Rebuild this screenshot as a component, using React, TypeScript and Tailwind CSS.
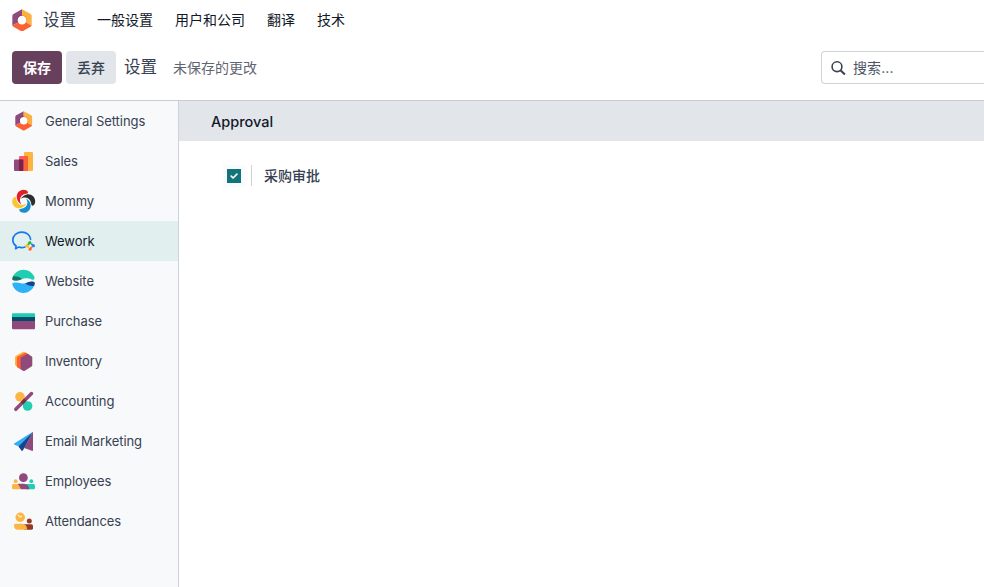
import type { ReactNode } from "react";

function Hex({ className }: { className: string }) {
  return (
    <svg className={className} viewBox="3 2.4 17.4 19.8" fill="none">
      <path d="M11.7 2.6 L4.2 6.8 Q3.2 7.4 3.2 8.4 V17 L11.7 12.3Z" fill="#8F4A7B" />
      <path d="M11.7 2.6 L19.2 6.8 Q20.2 7.4 20.2 8.4 V17 L11.7 12.3Z" fill="#FBB03F" />
      <path d="M11.7 12.3 L20.2 17 Q20 17.7 19.2 18.1 L12.6 21.8 Q11.7 22.2 10.8 21.8 L4.2 18.1 Q3.4 17.7 3.2 17Z" fill="#FC6133" />
      <path d="M11.7 7.4 L8.9 8.5 L7.6 11 V14.2 L11.7 12.3Z" fill="#6B3162" />
      <path d="M11.7 7.4 L14.6 8.6 L15.9 11 V14.5 L11.7 12.3Z" fill="#F78A2E" />
      <circle cx="11.7" cy="12.2" r="3.8" fill="white" />
    </svg>
  );
}

function Icon({ children }: { children: ReactNode }) {
  return (
    <svg className="h-6 w-6 shrink-0" viewBox="0 0 24 24" fill="none">
      {children}
    </svg>
  );
}

const blade = "M4.9 9.4 C3.9 4.8 7.2 .8 11.6 .8 C13.5 .8 15.3 1.6 16 3 C16.6 4.2 15.6 4.6 14 4.8 C10.3 5.3 8.2 7.8 8 10.6 C7.9 12.3 8.4 13.9 9.4 15.2 C7.2 14.1 5.5 12.2 4.9 9.4Z";

const apps = [
  { name: "General Settings", icon: <span className="flex h-6 w-6 items-center justify-center"><Hex className="h-[19.6px] w-[17.4px]" /></span> },
  {
    name: "Sales",
    icon: (
      <Icon>
        <rect x="12" y="3" width="9" height="19" rx="1" fill="#FBB540" />
        <rect x="7" y="7" width="9" height="15" rx="1" fill="#FF5A65" />
        <path d="M12 7h3a1 1 0 0 1 1 1v13a1 1 0 0 1-1 1h-3z" fill="#FC6232" />
        <rect x="2" y="10.4" width="9.3" height="11.6" rx="1" fill="#8F4A7B" />
        <path d="M7 10.4h3.3a1 1 0 0 1 1 1V21a1 1 0 0 1-1 1H7z" fill="#7A2249" />
      </Icon>
    ),
  },
  {
    name: "Mommy",
    icon: (
      <Icon>
        <path d={blade} fill="#E0212B" />
        <path d={blade} fill="#2D2D2E" transform="rotate(90 11.7 12.3)" />
        <path d={blade} fill="#178FD0" transform="rotate(180 11.7 12.3)" />
        <path d={blade} fill="#F9C633" transform="rotate(270 11.7 12.3)" />
      </Icon>
    ),
  },
  {
    name: "Wework",
    icon: (
      <Icon>
        <path d="M18.6 10.4 C18.2 6.1 14.5 3.1 9.9 3.1 C4.8 3.1 .8 6.5 .8 10.9 C.8 13.4 2.1 15.6 4.1 17 L3.6 19.7 L6.5 18.1 C8.5 18.7 11 18.8 13 18" stroke="#1677F2" strokeWidth="1.6" strokeLinecap="round" strokeLinejoin="round" />
        <path d="M16.3 15.4 L17.8 13.9" stroke="#27B928" strokeWidth="2" strokeLinecap="round" />
        <path d="M19.7 15.2 L21.2 16.7" stroke="#247CF0" strokeWidth="1.8" strokeLinecap="round" />
        <path d="M19.6 18.4 L18.1 19.9" stroke="#FB682F" strokeWidth="2" strokeLinecap="round" />
        <path d="M16.3 18.1 L14.9 16.7" stroke="#FBC01D" strokeWidth="2" strokeLinecap="round" />
        <circle cx="17.8" cy="13.4" r="1.5" fill="#27B928" />
        <circle cx="21.5" cy="16.8" r="1.5" fill="#247CF0" />
        <circle cx="18" cy="20.3" r="1.5" fill="#FB682F" />
        <circle cx="14.6" cy="16.8" r="1.5" fill="#FBC01D" />
      </Icon>
    ),
  },
  {
    name: "Website",
    icon: (
      <Icon>
        <path d="M.6 8.2 C2.5 3.8 6.5 .8 11.5 .8 S20.7 3.8 22.5 8.2 C22.7 10.6 21.8 11 19.6 10.4 C14.5 8.4 11 9.7 8.4 10.7 C5 12 1.2 12 .3 10.5Z" fill="#22CDB2" />
        <path d="M1 7.5 C3 7 7.3 7.5 9.9 10 C6 12 1.5 12 .3 10.6 Q.4 8.4 1 7.5Z" fill="#1B6E64" />
        <path d="M.2 14.5 C2.6 12.7 6 13.4 8.9 14.3 C13 15.6 17.3 12.5 20.5 12.6 Q22.7 12.8 22.9 14 C21.9 19.8 17.4 23.9 11.5 23.9 S1.2 19.8 .2 14.5Z" fill="#2DB2F7" />
        <path d="M13.2 14.5 C16.4 12.7 20.3 11.9 22.4 13.2 Q23 14.1 22.2 16.7 C19.2 17.5 15.8 16.5 13.2 14.5Z" fill="#19418E" />
      </Icon>
    ),
  },
  {
    name: "Purchase",
    icon: (
      <Icon>
        <path d="M1 4.3h21a1 1 0 0 1 1 1V9H0V5.3a1 1 0 0 1 1-1z" fill="#1DCCB2" />
        <path d="M0 8h23v5H0z" fill="#06496A" />
        <path d="M0 12h23v7.3a1 1 0 0 1-1 1H1a1 1 0 0 1-1-1z" fill="#8F4A7B" />
      </Icon>
    ),
  },
  {
    name: "Inventory",
    icon: (
      <Icon>
        <path d="M10.7 2.9 Q11.7 2.4 12.6 2.9 L16 4.8 L7 18.5 L4 17 Q3 16.4 3 15.3 V8.4 Q3 7.3 4 6.7Z" fill="#FBB540" />
        <path d="M5.4 7.8 L12.5 3.9 Q13.3 3.5 14.2 4 L17.5 5.8 L9 20.4 L5.4 18.4 Q4.8 18 4.8 17V8.8Q4.8 8.2 5.4 7.8Z" fill="#FC6132" />
        <path d="M9.4 8.2 L14.6 5.2 Q15.4 4.7 16.2 5.2 L19.5 7.2 Q20.3 7.6 20.3 8.6 V16 Q20.3 17 19.5 17.5 L12.8 21.7 Q11.9 22.2 11 21.7 L8.6 20.2 V9.6 Q8.6 8.7 9.4 8.2Z" fill="#8F4A7B" />
      </Icon>
    ),
  },
  {
    name: "Accounting",
    icon: (
      <Icon>
        <circle cx="8" cy="7.8" r="4.8" fill="#FBB540" />
        <circle cx="15.6" cy="17" r="4.8" fill="#22CDB2" />
        <path d="M3.8 20.3 L19.5 4.6" stroke="#8F4A7B" strokeWidth="3.5" strokeLinecap="round" />
        <path d="M9.8 14.3 L13.4 10.7" stroke="#72304A" strokeWidth="3.3" />
      </Icon>
    ),
  },
  {
    name: "Email Marketing",
    icon: (
      <Icon>
        <path d="M21 2.7 V21 Q21 22.2 19.8 21.8 L12.2 19.1Z" fill="#8F4A7B" />
        <path d="M21 2.7 L2.2 14.4 Q1.3 15.3 2.6 15.8 L7.2 17.5Z" fill="#2DAEF7" />
        <path d="M21 2.7 L6.5 17.4 L9.6 21.7 Q10.4 22.3 10.9 21.3 L12.3 19Z" fill="#144591" />
      </Icon>
    ),
  },
  {
    name: "Employees",
    icon: (
      <Icon>
        <circle cx="11.4" cy="8.7" r="4.4" fill="#8F4A7B" />
        <circle cx="3.7" cy="12.2" r="1.9" fill="#FBB540" />
        <circle cx="19.3" cy="12.2" r="1.9" fill="#22CDB2" />
        <path d="M1.5 14.9H9v5.4H1.2Q0 20.3 0 19.1V16.7Q0 14.9 1.5 14.9Z" fill="#FBB540" />
        <path d="M13 14.9h8.5Q23 14.9 23 16.7v2.4Q23 20.3 21.8 20.3H14Z" fill="#22CDB2" />
        <path d="M5.7 14.8 H12 Q15 14.8 16.4 17.3 Q17.2 18.8 17.2 20.3 H9 Q8 17.5 5.7 14.8Z" fill="#8F4A7B" />
      </Icon>
    ),
  },
  {
    name: "Attendances",
    icon: (
      <Icon>
        <circle cx="8.2" cy="8.2" r="4.7" fill="#FBB540" />
        <path d="M5.9 5.9 L8.2 8.2 L9.6 7" stroke="#FFF0D4" strokeWidth="1.1" strokeLinecap="round" strokeLinejoin="round" />
        <circle cx="17.3" cy="12" r="2.5" fill="#953B24" />
        <path d="M11 15.2h8.4Q21 15.2 21 17v2.3Q21 20.7 19.7 20.7H12Z" fill="#953B24" />
        <path d="M3.5 14.8H10Q14.9 15 15.2 20.7H6Q2 20.7 2 16.5Q2 14.8 3.5 14.8Z" fill="#FBB540" />
      </Icon>
    ),
  },
];

export default function App() {
  return (
    <div className="flex h-[587px] w-[984px] flex-col overflow-hidden bg-white font-['Inter','Noto_Sans_CJK_SC',sans-serif] text-sm text-[#111827]">
      <header className="flex h-10 shrink-0 items-center whitespace-nowrap pl-3">
        <Hex className="h-[22.5px] w-5" />
        <span className="ml-[11px] w-[54px] pt-0.5 text-[16.5px] text-[#374151]">设置</span>
        <nav className="flex gap-[22px]">
          <span className="w-[56px]">一般设置</span>
          <span>用户和公司</span>
          <span>翻译</span>
          <span>技术</span>
        </nav>
      </header>
      <div className="flex h-[61px] shrink-0 items-start justify-between border-b border-[#c9ccd2] pt-[11px]">
        <div className="flex h-[33px] items-center pl-3">
          <button className="h-[33px] w-[50px] rounded-[4px] bg-[#66405c] font-bold text-white">保存</button>
          <button className="ml-1 h-[33px] w-[50px] rounded-[4px] bg-[#e2e5ea] font-medium text-[#374151]">丢弃</button>
          <span className="ml-2 text-[16.5px] text-[#374151]">设置</span>
          <span className="ml-4 text-[#5f6673]">未保存的更改</span>
        </div>
        <div className="flex h-[33px] w-[163px] items-center rounded-l-[4px] border border-r-0 border-[#cfd2d6] pl-2 text-[#4b5563]">
          <svg className="h-4 w-4" viewBox="0 0 16 16" fill="none" stroke="#374151" strokeWidth="1.6">
            <circle cx="7" cy="6.7" r="4.9" />
            <path d="M10.5 10.2 L14.9 14.5" strokeWidth="2" />
          </svg>
          <span className="ml-[7px] tracking-[0.1px]">搜索...</span>
        </div>
      </div>
      <div className="flex min-h-0 flex-1">
        <aside className="w-[179px] shrink-0 border-r border-[#cfd2d6] bg-[#f8f9fb]">
          {apps.map((app) => (
            <div key={app.name} className={app.name === "Wework" ? "flex h-10 items-center bg-[#e1efef] pl-3 text-[13px] text-[#111827]" : "flex h-10 items-center pl-3 text-[13px] text-[#374151]"}>
              {app.icon}
              <span className="ml-[9px] whitespace-nowrap tracking-[-0.07px]">{app.name}</span>
            </div>
          ))}
        </aside>
        <main className="flex-1">
          <h2 className="flex h-10 items-center bg-[#e2e5ea] pl-8 pt-0.5 text-[14.5px] font-medium">Approval</h2>
          <div className="flex items-center pl-11 pt-6">
            <div className="flex h-[22px] w-[22px] items-center justify-center bg-[#f8fcfc]">
              <span className="flex h-[14px] w-[14px] items-center justify-center bg-[#12737a]">
                <svg className="h-[14px] w-[14px]" viewBox="0 0 14 14" fill="none" stroke="white" strokeWidth="1.7" strokeLinecap="round" strokeLinejoin="round">
                  <path d="M4.2 7.2 L6.1 9 L9.9 5.2" />
                </svg>
              </span>
            </div>
            <div className="mb-px ml-[6px] flex h-[21px] items-center border-l border-[#cfd2d6] pl-3 font-medium text-[#374151]">采购审批</div>
          </div>
        </main>
      </div>
    </div>
  );
}
